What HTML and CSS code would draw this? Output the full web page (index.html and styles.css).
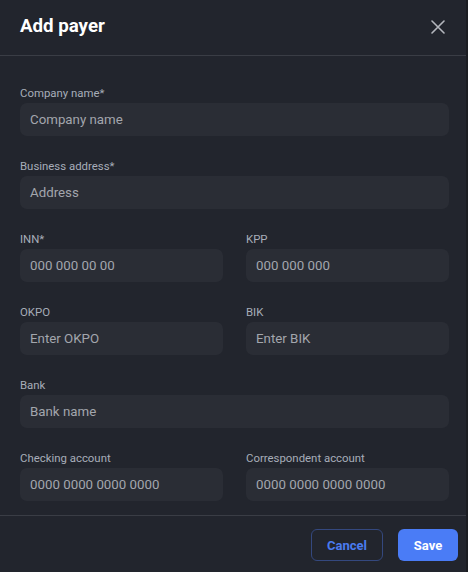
FILE: index.html
```html
<!DOCTYPE html>
<html>
<head>
<meta charset="utf-8">
<link rel="stylesheet" href="styles.css">
</head>
<body>
<div class="modal">
  <header class="head">
    <h1 class="title">Add payer</h1>
    <button class="close" aria-label="Close">
      <svg width="14" height="14" viewBox="0 0 14 14"><path d="M1 1 L13 13 M13 1 L1 13" stroke="#b4b7bd" stroke-width="1.6" stroke-linecap="round" fill="none"/></svg>
    </button>
  </header>
  <div class="body">
    <div class="field">
      <label class="label">Company name*</label>
      <div class="input">Company name</div>
    </div>
    <div class="field">
      <label class="label">Business address*</label>
      <div class="input">Address</div>
    </div>
    <div class="row">
      <div class="field">
        <label class="label">INN*</label>
        <div class="input">000 000 00 00</div>
      </div>
      <div class="field">
        <label class="label">KPP</label>
        <div class="input">000 000 000</div>
      </div>
    </div>
    <div class="row">
      <div class="field">
        <label class="label">OKPO</label>
        <div class="input">Enter OKPO</div>
      </div>
      <div class="field">
        <label class="label">BIK</label>
        <div class="input">Enter BIK</div>
      </div>
    </div>
    <div class="field">
      <label class="label">Bank</label>
      <div class="input">Bank name</div>
    </div>
    <div class="row">
      <div class="field">
        <label class="label">Checking account</label>
        <div class="input">0000 0000 0000 0000</div>
      </div>
      <div class="field">
        <label class="label">Correspondent account</label>
        <div class="input">0000 0000 0000 0000</div>
      </div>
    </div>
  </div>
  <footer class="foot">
    <button class="btn btn-cancel">Cancel</button>
    <button class="btn btn-save">Save</button>
  </footer>
</div>
</body>
</html>
```
FILE: styles.css
```css
html, body {
  margin: 0;
  padding: 0;
  background: #1b1d22;
}
body {
  font-family: Roboto, "Liberation Sans", sans-serif;
}
.modal {
  width: 466px;
  height: 572px;
  background: #22252d;
  display: flex;
  flex-direction: column;
  border-right: 2px solid #1b1d22;
}
.head {
  height: 55px;
  border-bottom: 1px solid #3a3d45;
  display: flex;
  align-items: center;
  justify-content: space-between;
  padding: 0 20px 0 20px;
  flex-shrink: 0;
}
.title {
  margin: 0;
  font-size: 18.7px;
  font-weight: 700;
  color: #ffffff;
  line-height: 24px;
  padding-bottom: 4px;
}
.close {
  background: none;
  border: none;
  padding: 0;
  width: 16px;
  height: 16px;
  display: flex;
  align-items: center;
  justify-content: center;
  margin-bottom: 2px;
  cursor: pointer;
}
.body {
  padding: 30px 17px 14px 20px;
  display: flex;
  flex-direction: column;
  gap: 23px;
}
.row {
  display: grid;
  grid-template-columns: 1fr 1fr;
  column-gap: 23px;
}
.field {
  display: flex;
  flex-direction: column;
}
.label {
  font-size: 11.4px;
  line-height: 15px;
  color: #a7adb9;
  margin-bottom: 2px;
}
.input {
  height: 33px;
  box-sizing: border-box;
  background: #2a2d35;
  border-radius: 7px;
  padding: 0 10px;
  display: flex;
  align-items: center;
  font-size: 13.3px;
  font-weight: 400;
  color: #a3a6ad;
}
.foot {
  border-top: 1px solid #3a3d45;
  padding: 13px 8px 11px 20px;
  display: flex;
  justify-content: flex-end;
  gap: 15px;
  margin-top: auto;
}
.btn {
  height: 32px;
  border-radius: 6px;
  font-family: Roboto, "Liberation Sans", sans-serif;
  font-size: 13px;
  font-weight: 700;
  cursor: pointer;
}
.btn-cancel {
  width: 72px;
  background: transparent;
  border: 1px solid #34487e;
  color: #4a7bf0;
}
.btn-save {
  width: 60px;
  background: #4a7cf6;
  border: none;
  color: #ffffff;
}
```
